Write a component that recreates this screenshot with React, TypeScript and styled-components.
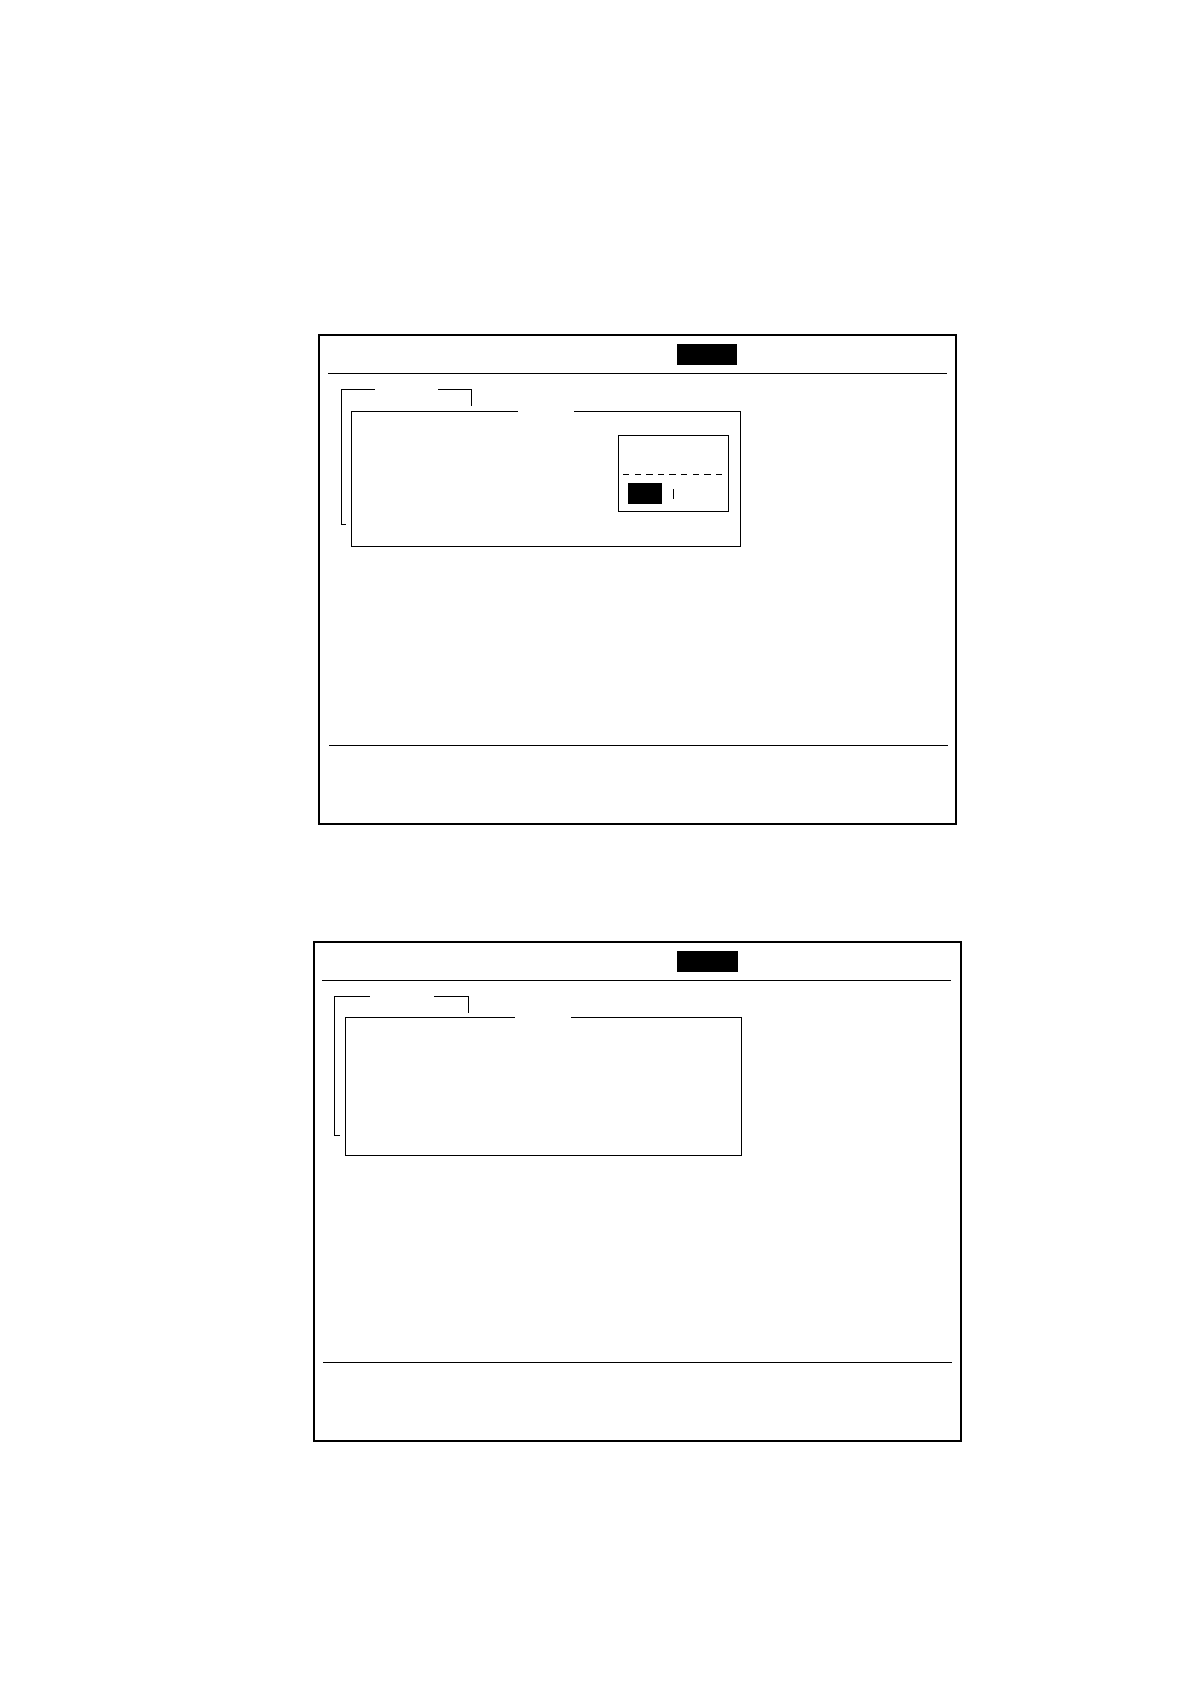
import React from 'react';
import styled, { createGlobalStyle } from 'styled-components';

const GlobalStyle = createGlobalStyle`
  *, *::before, *::after {
    box-sizing: border-box;
  }
  html, body {
    margin: 0;
    padding: 0;
    background: #ffffff;
  }
  body {
    font-family: 'Liberation Sans', Arial, sans-serif;
    color: #000000;
  }
`;

interface PanelSpec {
  left: number;
  width: number;
  height: number;
  gapAbove: number;
  insetL: number;
  insetR: number;
  keyLeft: number;
  keyWidth: number;
  bodyLeft: number;
  tabs: [number, number, number];
  tabHeight: number;
  bracket: number;
  boxX: number;
  boxY: number;
  boxW: number;
  boxH: number;
  legendX: number;
  legendW: number;
  dialog: boolean;
}

const panels: PanelSpec[] = [
  {
    left: 318,
    width: 639,
    height: 491,
    gapAbove: 0,
    insetL: 8,
    insetR: 8,
    keyLeft: 349,
    keyWidth: 60,
    bodyLeft: 20.5,
    tabs: [34.5, 63, 34],
    tabHeight: 17,
    bracket: 136,
    boxX: 10.5,
    boxY: 5,
    boxW: 390,
    boxH: 136,
    legendX: 166,
    legendW: 56,
    dialog: true,
  },
  {
    left: 312.5,
    width: 649.5,
    height: 501,
    gapAbove: 116,
    insetL: 7.5,
    insetR: 9,
    keyLeft: 355,
    keyWidth: 61,
    bodyLeft: 19.5,
    tabs: [35.5, 64.5, 35],
    tabHeight: 17.7,
    bracket: 140.7,
    boxX: 11,
    boxY: 4.3,
    boxW: 396.6,
    boxH: 139,
    legendX: 168.5,
    legendW: 56.5,
    dialog: false,
  },
];

function Screen({ spec }: { spec: PanelSpec }) {
  return (
    <Panel $left={spec.left} $width={spec.width} $height={spec.height} $gap={spec.gapAbove}>
      <Header $l={spec.insetL} $r={spec.insetR}>
        <TitleKey $left={spec.keyLeft} $width={spec.keyWidth} />
      </Header>
      <Body $left={spec.bodyLeft}>
        <Group $bracket={spec.bracket}>
          <TabRow $height={spec.tabHeight}>
            <TabEdge $width={spec.tabs[0]} />
            <TabGap $width={spec.tabs[1]} />
            <TabEdge $width={spec.tabs[2]} $closed />
          </TabRow>
          <InnerBox $x={spec.boxX} $y={spec.boxY} $w={spec.boxW} $h={spec.boxH}>
            <Legend $x={spec.legendX} $w={spec.legendW} />
            {spec.dialog && (
              <Dialog>
                <DialogTop />
                <Dashes />
                <DialogRow>
                  <SoftKey />
                  <Caret />
                </DialogRow>
              </Dialog>
            )}
          </InnerBox>
        </Group>
      </Body>
      <Footer $l={spec.insetL + 1} $r={spec.insetR - 1} />
    </Panel>
  );
}

export default function App() {
  return (
    <>
      <GlobalStyle />
      <Page>
        {panels.map((p, i) => (
          <Screen key={i} spec={p} />
        ))}
      </Page>
    </>
  );
}

const Page = styled.div`
  width: 1190px;
  min-height: 1684px;
  padding-top: 334px;
  display: flex;
  flex-direction: column;
  align-items: flex-start;
  background: #ffffff;
`;

const Panel = styled.section<{ $left: number; $width: number; $height: number; $gap: number }>`
  margin-left: ${(p) => p.$left}px;
  margin-top: ${(p) => p.$gap}px;
  width: ${(p) => p.$width}px;
  height: ${(p) => p.$height}px;
  border: 2px solid #000;
  display: flex;
  flex-direction: column;
`;

const Header = styled.div<{ $l: number; $r: number }>`
  height: 37.5px;
  margin: 0 ${(p) => p.$r}px 0 ${(p) => p.$l}px;
  border-bottom: 1px solid #000;
  display: flex;
  align-items: center;
  flex-shrink: 0;
`;

const TitleKey = styled.div<{ $left: number; $width: number }>`
  margin-left: ${(p) => p.$left}px;
  width: ${(p) => p.$width}px;
  height: 21px;
  background: #000;
`;

const Body = styled.div<{ $left: number }>`
  flex: 1;
  padding: 15px 0 0 ${(p) => p.$left}px;
`;

const Group = styled.div<{ $bracket: number }>`
  position: relative;
  width: fit-content;

  /* left bracket of the tab group with its small foot */
  &::before {
    content: '';
    position: absolute;
    left: 0;
    top: 0;
    width: 5.5px;
    height: ${(p) => p.$bracket}px;
    border-left: 1px solid #000;
    border-bottom: 1px solid #000;
  }
`;

const TabRow = styled.div<{ $height: number }>`
  display: flex;
  height: ${(p) => p.$height}px;
`;

const TabEdge = styled.div<{ $width: number; $closed?: boolean }>`
  width: ${(p) => p.$width}px;
  border-top: 1px solid #000;
  border-right: ${(p) => (p.$closed ? '1px solid #000' : 'none')};
`;

const TabGap = styled.div<{ $width: number }>`
  width: ${(p) => p.$width}px;
`;

const InnerBox = styled.fieldset<{ $x: number; $y: number; $w: number; $h: number }>`
  margin: ${(p) => p.$y}px 0 0 ${(p) => p.$x}px;
  width: ${(p) => p.$w}px;
  height: ${(p) => p.$h}px;
  min-width: 0;
  padding: 0;
  border: 1px solid #000;
  display: flex;
  justify-content: flex-end;
  align-items: flex-start;
`;

const Legend = styled.legend<{ $x: number; $w: number }>`
  margin-left: ${(p) => p.$x}px;
  width: ${(p) => p.$w}px;
  height: 0;
  padding: 0;
  font-size: 0;
  line-height: 0;
`;

const Dialog = styled.div`
  margin: 23.5px 11.3px 0 0;
  width: 111px;
  height: 77px;
  border: 1px solid #000;
  display: flex;
  flex-direction: column;
`;

const DialogTop = styled.div`
  height: 38px;
`;

const Dashes = styled.div`
  height: 1px;
  margin: 0 5px 0 4px;
  background: repeating-linear-gradient(to right, #000 0 6.4px, transparent 6.4px 11.6px);
`;

const DialogRow = styled.div`
  display: flex;
  align-items: center;
  padding: 8px 0 0 9px;
`;

const SoftKey = styled.div`
  width: 34px;
  height: 21px;
  background: #000;
`;

const Caret = styled.div`
  width: 1px;
  height: 10px;
  margin-left: 11px;
  background: #000;
`;

const Footer = styled.div<{ $l: number; $r: number }>`
  height: 78px;
  margin: 0 ${(p) => p.$r}px 0 ${(p) => p.$l}px;
  border-top: 1px solid #000;
  flex-shrink: 0;
`;
